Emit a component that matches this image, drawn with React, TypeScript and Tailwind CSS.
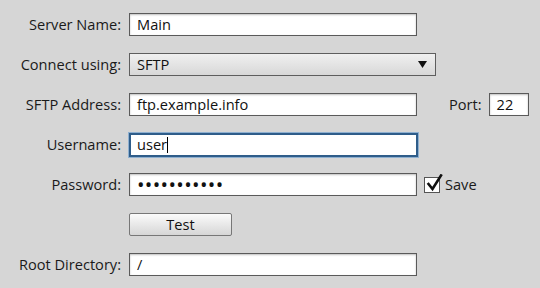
import React from "react";

const field =
  "h-[23px] bg-white border border-[#5a5a5a] shadow-[inset_0_1px_2px_rgba(0,0,0,0.25)] flex items-center pl-[7px] text-[#111]";

function Label({ children }: { children: React.ReactNode }) {
  return <div className="w-[121px] shrink-0 text-right text-[#1a1a1a] whitespace-nowrap">{children}</div>;
}

export default function App() {
  return (
    <div
      className="w-[540px] h-[288px] bg-[#d6d6d6] pt-[13px] flex flex-col gap-[17px] text-[14.6px] leading-none"
      style={{ fontFamily: '"Open Sans", "Noto Sans", sans-serif' }}
    >
      <div className="flex items-center h-[23px]">
        <Label>Server Name:</Label>
        <div className={`${field} ml-[8px] w-[288px]`}>Main</div>
      </div>

      <div className="flex items-center h-[23px]">
        <Label>Connect using:</Label>
        <div className="ml-[8px] w-[307px] h-[23px] border border-[#5e5e5e] bg-gradient-to-b from-[#f0f0f0] to-[#d8d8d8] flex items-center pl-[7px] pr-[8px] justify-between text-[#111]">
          <span>SFTP</span>
          <svg width="9" height="7" viewBox="0 0 9 7">
            <path d="M0 0 L9 0 L4.5 7 Z" fill="#111" />
          </svg>
        </div>
      </div>

      <div className="flex items-center h-[23px]">
        <Label>SFTP Address:</Label>
        <div className={`${field} ml-[8px] w-[288px]`}>ftp.example.info</div>
        <div className="ml-[32px] text-[#1a1a1a]">Port:</div>
        <div className={`${field} ml-[7px] w-[40px]`}>22</div>
      </div>

      <div className="flex items-center h-[23px]">
        <Label>Username:</Label>
        <div className="ml-[8px] w-[289px] h-[24px] bg-white border-2 border-[#2f5d8a] shadow-[0_0_0_1px_#8fb0d0] flex items-center pl-[6px] text-[#111]">
          <span>user</span>
          <span className="inline-block w-[1px] h-[16px] bg-black" />
        </div>
      </div>

      <div className="flex items-center h-[23px]">
        <Label>Password:</Label>
        <div className={`${field} ml-[8px] w-[288px]`}>
          <span className="text-[20px] tracking-[0.35px]">•••••••••••</span>
        </div>
        <div className="ml-[7px] relative w-[16px] h-[16px] bg-white border border-[#555]">
          <svg
            className="absolute left-[1px] top-[-4px]"
            width="17"
            height="18"
            viewBox="0 0 17 18"
          >
            <path d="M2.5 10 L6.5 15 L15 1.5" stroke="#111" strokeWidth="2.6" fill="none" strokeLinecap="square" />
          </svg>
        </div>
        <div className="ml-[5px] text-[#1a1a1a]">Save</div>
      </div>

      <div className="flex items-center h-[23px]">
        <div className="w-[121px] shrink-0" />
        <div className="ml-[8px] w-[103px] h-[23px] border border-[#777] rounded-[2px] bg-gradient-to-b from-[#fbfbfb] to-[#d6d6d6] flex items-center justify-center text-[#111]">
          Test
        </div>
      </div>

      <div className="flex items-center h-[23px]">
        <Label>Root Directory:</Label>
        <div className={`${field} ml-[8px] w-[288px]`}>/</div>
      </div>
    </div>
  );
}
